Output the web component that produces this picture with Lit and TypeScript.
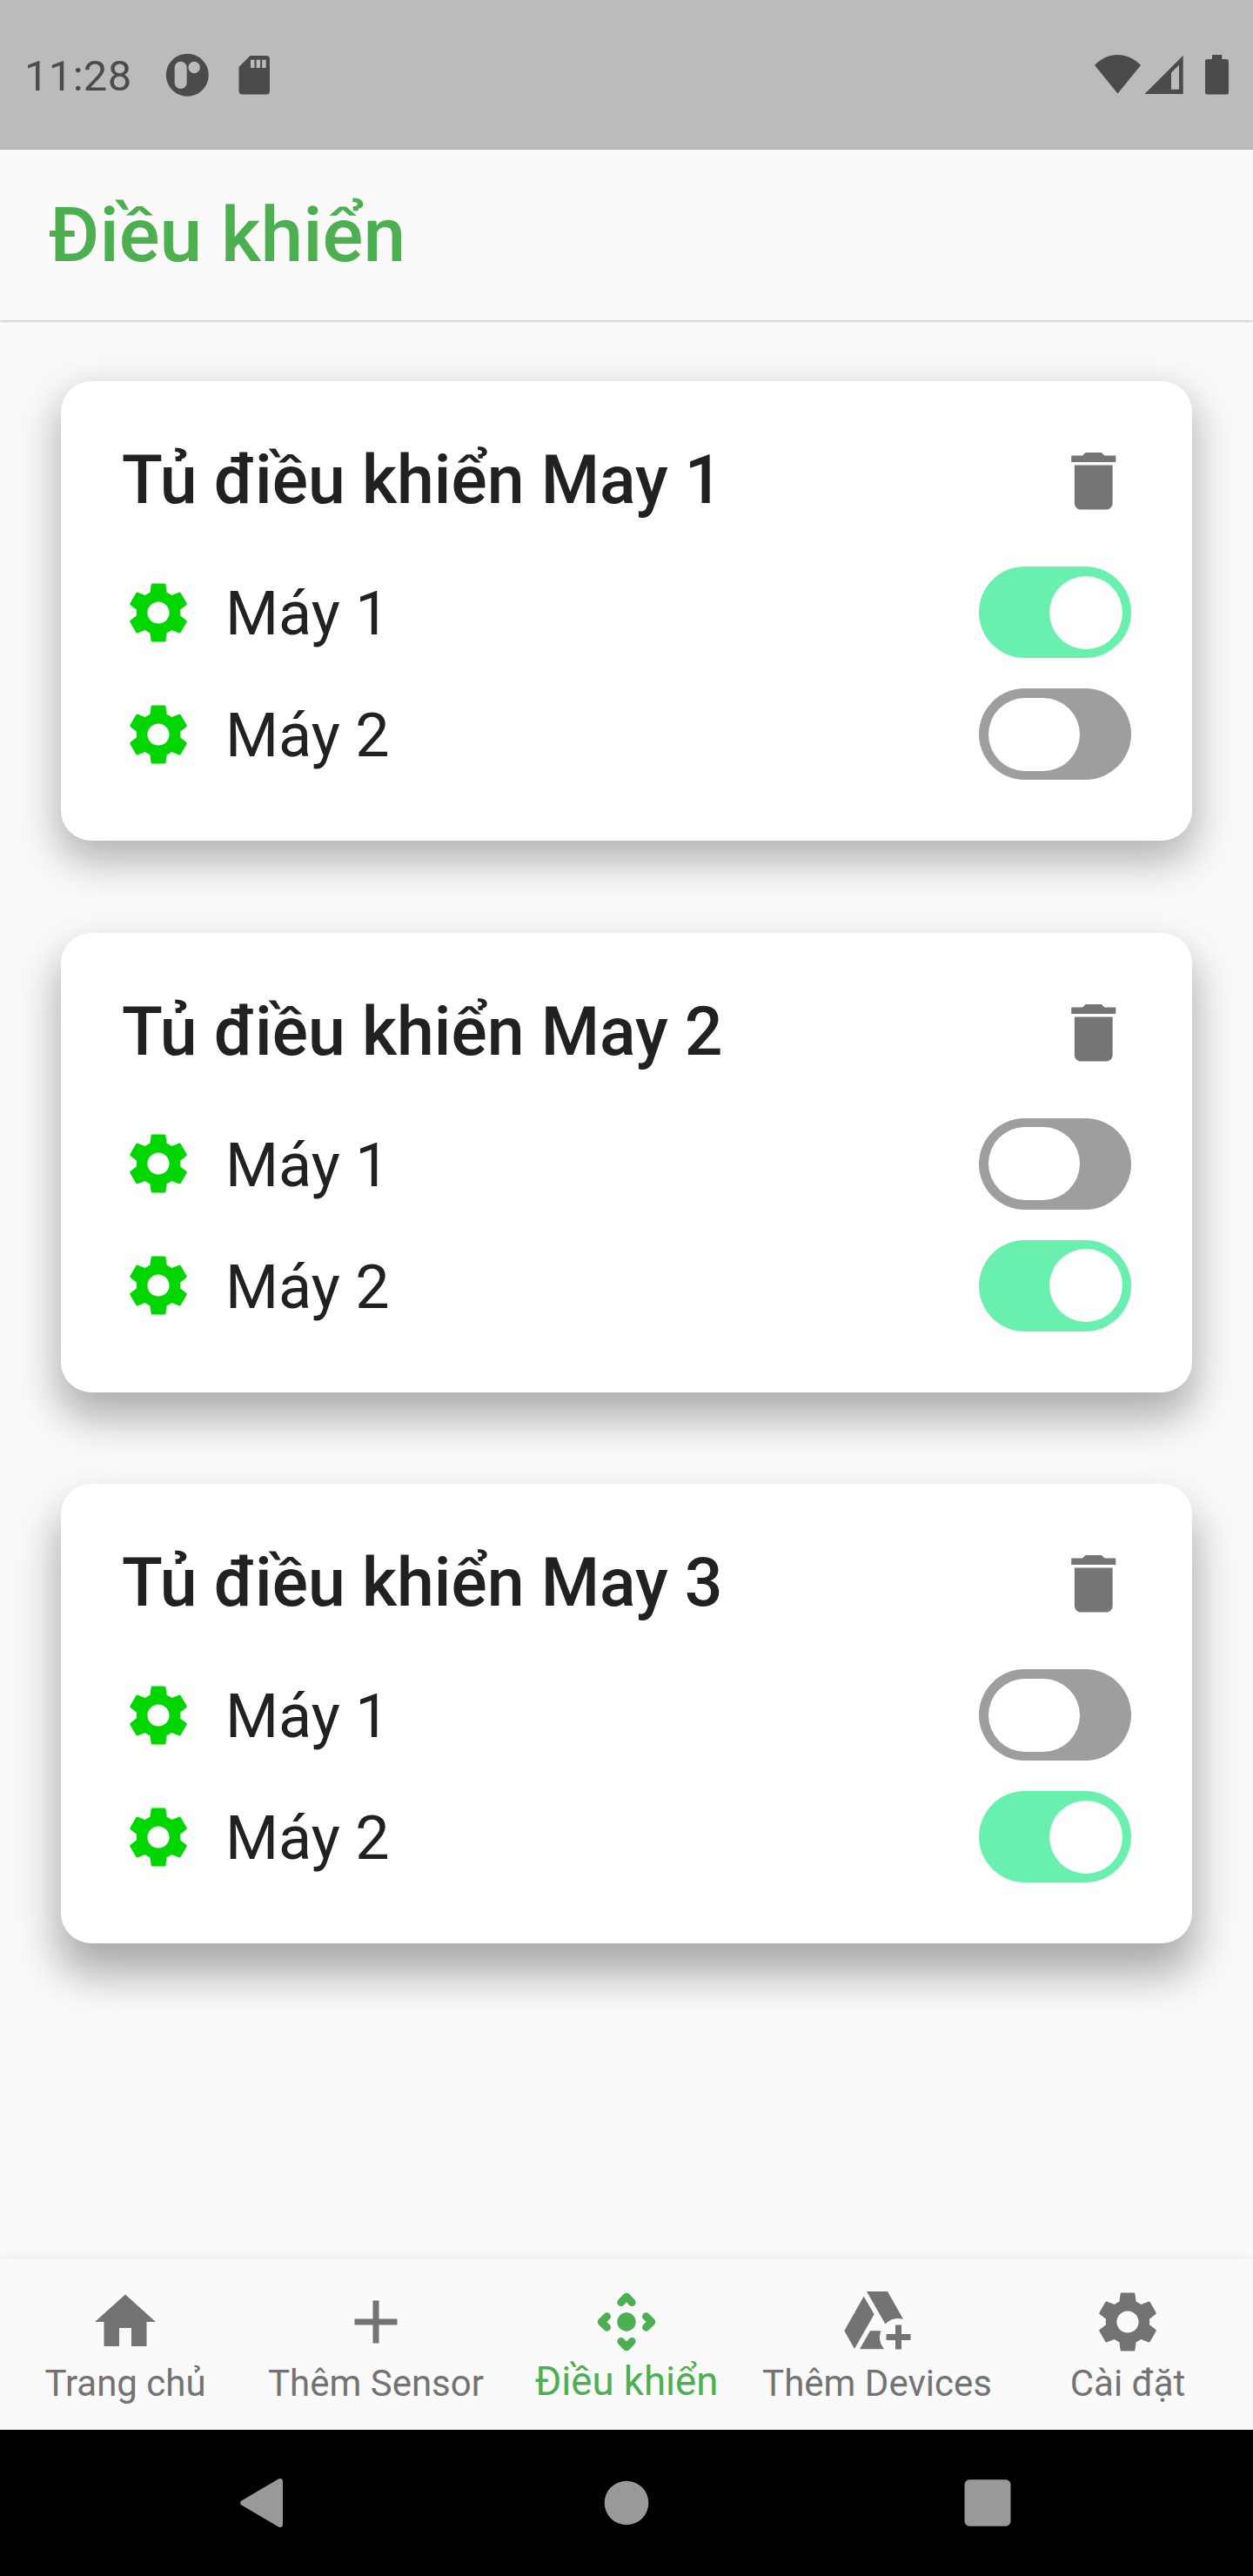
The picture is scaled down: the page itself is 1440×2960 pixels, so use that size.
import { LitElement, html, css, svg } from "lit";
import { customElement, property, state } from "lit/decorators.js";
import { classMap } from "lit/directives/class-map.js";

const GEAR =
  "M19.14 12.94c.04-.3.06-.61.06-.94 0-.32-.02-.64-.07-.94l2.03-1.58c.18-.14.23-.41.12-.61l-1.92-3.32c-.12-.22-.37-.29-.59-.22l-2.39.96c-.5-.38-1.03-.7-1.62-.94l-.36-2.54c-.04-.24-.24-.41-.48-.41h-3.84c-.24 0-.43.17-.47.41l-.36 2.54c-.59.24-1.13.57-1.62.94l-2.39-.96c-.22-.08-.47 0-.59.22L2.74 8.87c-.12.21-.08.47.12.61l2.03 1.58c-.05.3-.09.63-.09.94s.02.64.07.94l-2.03 1.58c-.18.14-.23.41-.12.61l1.92 3.32c.12.22.37.29.59.22l2.39-.96c.5.38 1.03.7 1.62.94l.36 2.54c.05.24.24.41.48.41h3.84c.24 0 .44-.17.47-.41l.36-2.54c.59-.24 1.13-.56 1.62-.94l2.39.96c.22.08.47 0 .59-.22l1.92-3.32c.12-.22.07-.47-.12-.61l-2.01-1.58zM12 15.6c-1.98 0-3.6-1.62-3.6-3.6s1.62-3.6 3.6-3.6 3.6 1.62 3.6 3.6-1.62 3.6-3.6 3.6z";
const TRASH =
  "M6 19c0 1.1.9 2 2 2h8c1.1 0 2-.9 2-2V7H6v12zM19 4h-3.5l-1-1h-5l-1 1H5v2h14V4z";

const NAV_ICONS: Record<string, unknown> = {
  home: svg`<path d="M10 20v-6h4v6h5v-8h3L12 3 2 12h3v8z"/>`,
  add: svg`<path d="M19 13h-6v6h-2v-6H5v-2h6V5h2v6h6v2z"/>`,
  control: svg`
    <path
      fill="none"
      stroke="currentColor"
      stroke-width="2.5"
      stroke-linecap="round"
      stroke-linejoin="round"
      d="M5.6 10.200L3.750 12L5.6 13.800M18.4 10.200L20.250 12L18.4 13.800M10.200 5.6L12 3.750L13.800 5.6M10.200 18.4L12 20.250L13.800 18.4"/>
    <circle cx="12" cy="12" r="3.05"/>`,
  device: svg`
    <path d="M8.570 2H15.430L20.570 11.100A6.100 6.100 0 0 0 14.700 12.700z"/>
    <path d="M7.620 3.620L11.050 9.520L4.570 20.860L1.240 14.950z"/>
    <path d="M9.710 14.950H13.240A6.100 6.100 0 0 0 14.300 20.950H6.300z"/>
    <path d="M18 13h2v3h3v2h-3v3h-2v-3h-3v-2h3z"/>`,
  gear: svg`<path d=${GEAR}/>`,
};

@customElement("toggle-switch")
class ToggleSwitch extends LitElement {
  @property({ type: Boolean }) on = false;

  static styles = css`
    :host {
      display: block;
    }
    .track {
      box-sizing: border-box;
      width: 175px;
      height: 105px;
      padding: 10.5px;
      border-radius: 52.5px;
      background: #9e9e9e;
      display: flex;
      justify-content: flex-start;
    }
    .thumb {
      width: 105px;
      height: 84px;
      border-radius: 42px;
      background: #fff;
    }
    .track.on {
      background: #69f0ae;
      justify-content: flex-end;
    }
    .on .thumb {
      width: 84px;
    }
  `;

  render() {
    return html`<div class=${classMap({ track: true, on: this.on })}>
      <div class="thumb"></div>
    </div>`;
  }
}

@customElement("cabinet-card")
class CabinetCard extends LitElement {
  @property() name = "";
  @property({ attribute: false }) machines: boolean[] = [];

  static styles = css`
    :host {
      display: block;
    }
    .card {
      box-sizing: border-box;
      height: 528px;
      padding: 70px;
      border-radius: 35px;
      background: #fff;
      box-shadow: var(--card-shadow);
    }
    .head {
      display: flex;
      align-items: center;
      justify-content: space-between;
      height: 90px;
      margin-bottom: 53px;
    }
    .name {
      font-size: 77px;
      line-height: 90px;
      font-weight: 500;
      white-space: nowrap;
      padding-bottom: 2px;
    }
    .trash {
      width: 87.5px;
      height: 87.5px;
      fill: #757575;
    }
    .rows {
      display: flex;
      flex-direction: column;
      gap: 35px;
    }
    .row {
      display: flex;
      align-items: center;
      height: 105px;
    }
    .gear {
      width: 84px;
      height: 84px;
      fill: #00d600;
      margin-right: 35px;
    }
    .label {
      flex: 1;
      font-size: 70px;
      line-height: 82px;
      padding-top: 3px;
    }
  `;

  render() {
    return html`<section class="card">
      <div class="head">
        <div class="name">${this.name}</div>
        <svg class="trash" viewBox="0 0 24 24"><path d=${TRASH} /></svg>
      </div>
      <div class="rows">
        ${this.machines.map(
          (on, i) => html`<div class="row">
            <svg class="gear" viewBox="0 0 24 24"><path d=${GEAR} /></svg>
            <div class="label">Máy ${i + 1}</div>
            <toggle-switch ?on=${on}></toggle-switch>
          </div>`
        )}
      </div>
    </section>`;
  }
}

@customElement("app-root")
class AppRoot extends LitElement {
  @state() cabinets = [
    { name: "Tủ điều khiển May 1", machines: [true, false] },
    { name: "Tủ điều khiển May 2", machines: [false, true] },
    { name: "Tủ điều khiển May 3", machines: [false, true] },
  ];

  @state() tabs = [
    { icon: "home", label: "Trang chủ", active: false },
    { icon: "add", label: "Thêm Sensor", active: false },
    { icon: "control", label: "Điều khiển", active: true },
    { icon: "device", label: "Thêm Devices", active: false },
    { icon: "gear", label: "Cài đặt", active: false },
  ];

  static styles = css`
    :host {
      display: flex;
      flex-direction: column;
      width: 1440px;
      height: 2960px;
      overflow: hidden;
      background: #fafafa;
      color: #212121;
      font-family: Roboto, "Noto Sans", sans-serif;
    }
    .status {
      box-sizing: border-box;
      flex: none;
      height: 172px;
      padding: 0 28px;
      display: flex;
      align-items: center;
      background: #bbbbbb;
      color: #4b4b4b;
      fill: #4b4b4b;
    }
    .clock {
      font-size: 49px;
      line-height: 58px;
      width: 162px;
      padding-top: 3px;
      letter-spacing: 0.3px;
    }
    .status svg {
      display: block;
      flex: none;
    }
    .spacer {
      flex: 1;
    }
    .appbar {
      box-sizing: border-box;
      flex: none;
      height: 196px;
      padding: 0 56px;
      display: flex;
      align-items: center;
      color: #4caf50;
      font-size: 87.5px;
      line-height: 102px;
      font-weight: 500;
      background: #fafafa;
      box-shadow: 0 1px 3px rgba(0, 0, 0, 0.26);
      z-index: 1;
    }
    .list {
      flex: 1;
      min-height: 0;
      padding: 70px;
      display: flex;
      flex-direction: column;
      gap: 105.5px;
    }
    /* Elevation shadows lengthen the further a card sits from the light at the top. */
    .cabinet {
      --card-shadow: 0 20px 48px 4px rgba(0, 0, 0, 0.29);
    }
    .cabinet:nth-child(2) {
      --card-shadow: 0 26px 48px 4px rgba(0, 0, 0, 0.305);
    }
    .cabinet:nth-child(3) {
      --card-shadow: 0 32px 50px 4px rgba(0, 0, 0, 0.32);
    }
    .tabs {
      flex: none;
      height: 196px;
      display: grid;
      grid-template-columns: repeat(5, 1fr);
      background: #fafafa;
      box-shadow: 0 -2px 12px rgba(0, 0, 0, 0.06);
      z-index: 1;
    }
    .tab {
      display: flex;
      flex-direction: column;
      align-items: center;
      padding-top: 30px;
      color: #737373;
      fill: #737373;
      font-size: 42px;
      line-height: 50px;
      white-space: nowrap;
    }
    .tab svg {
      width: 84px;
      height: 84px;
      margin-bottom: 4px;
    }
    .tab.active {
      color: #4caf50;
      fill: #4caf50;
      font-size: 45.5px;
    }
    .tab.active svg {
      margin-bottom: 2px;
    }
    .sysbar {
      flex: none;
      height: 168px;
      background: #000;
    }
    .sysbar svg {
      display: block;
      fill: #999;
    }
  `;

  render() {
    return html`
      <header class="status">
        <div class="clock">11:28</div>
        <svg width="122" height="52" viewBox="190 60 122 52">
          <path
            fill-rule="evenodd"
            d="M215.300 61.700a24.500 24.500 0 1 1 0 49a24.500 24.500 0 1 1 0-49z
              M207.700 70.700a7 7 0 0 0-7 7v17.300a7 7 0 0 0 14 0v-17.300a7 7 0 0 0-7-7z
              M223.200 70.800a6.700 6.700 0 1 0 0 13.400a6.700 6.700 0 1 0 0-13.400z"
          />
          <path
            fill-rule="evenodd"
            d="M287.500 64H306a4 4 0 0 1 4 4v36.500a4 4 0 0 1-4 4H278.500a4 4 0 0 1-4-4V77z
              M288 68.700v9.300h4.500v-9.300z M294.600 68.700v9.300h4.500v-9.300z M301.200 68.700v9.300h4.500v-9.300z"
          />
        </svg>
        <div class="spacer"></div>
        <svg width="156" height="52" viewBox="1256 60 156 52">
          <path d="M1284.500 107.500L1258 75C1273 59 1296 59 1311 75z" />
          <path
            fill-rule="evenodd"
            d="M1359.700 63.700V108H1315.500z M1355 74.700L1346 83.500V102.700H1355z"
          />
          <path
            d="M1393 63h11.300v5H1409.500a2.500 2.500 0 0 1 2.500 2.500V106a2.500 2.500 0 0 1-2.500 2.500H1387.500a2.500 2.500 0 0 1-2.500-2.500V70.500a2.500 2.500 0 0 1 2.500-2.500H1393z"
          />
        </svg>
      </header>
      <div class="appbar">Điều khiển</div>
      <main class="list">
        ${this.cabinets.map(
          (c) => html`<cabinet-card
            class="cabinet"
            .name=${c.name}
            .machines=${c.machines}
          ></cabinet-card>`
        )}
      </main>
      <nav class="tabs">
        ${this.tabs.map(
          (t) => html`<div class=${classMap({ tab: true, active: t.active })}>
            <svg viewBox="0 0 24 24">${NAV_ICONS[t.icon]}</svg>
            <span>${t.label}</span>
          </div>`
        )}
      </nav>
      <footer class="sysbar">
        <svg width="1440" height="168" viewBox="0 0 1440 168">
          <path d="M277.500 81.500L320 56.500Q325 54.500 325 59.500V108.500Q325 113.500 320 111.500L277.500 86.500Q274.500 84 277.500 81.500z" />
          <circle cx="720" cy="84" r="25.300" />
          <rect x="1108.500" y="57.300" width="53" height="53.400" rx="5.500" />
        </svg>
      </footer>
    `;
  }
}
